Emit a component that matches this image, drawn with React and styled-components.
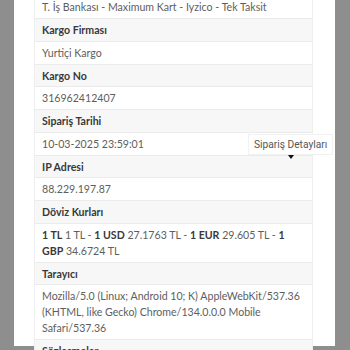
import React from "react";
import styled, { createGlobalStyle } from "styled-components";

const Global = createGlobalStyle`
  html, body { margin: 0; padding: 0; }
  body { font-family: "Lato", "Open Sans", sans-serif; }
`;

const rows = [
  { label: null, value: "T. İş Bankası - Maximum Kart - Iyzico - Tek Taksit" },
  { label: "Kargo Firması", value: "Yurtiçi Kargo" },
  { label: "Kargo No", value: "316962412407" },
  { label: "Sipariş Tarihi", value: "10-03-2025 23:59:01" },
  { label: "IP Adresi", value: "88.229.197.87" },
  {
    label: "Döviz Kurları",
    value: (
      <>
        <b>1 TL</b> 1 TL - <b>1 USD</b> 27.1763 TL - <b>1 EUR</b> 29.605 TL - <b>1 GBP</b> 34.6724 TL
      </>
    ),
  },
  {
    label: "Tarayıcı",
    value:
      "Mozilla/5.0 (Linux; Android 10; K) AppleWebKit/537.36 (KHTML, like Gecko) Chrome/134.0.0.0 Mobile Safari/537.36",
  },
  { label: "Sözleşmeler", value: "" },
];

const App = () => {
  return (
    <>
      <Global />
      <Overlay>
        <Modal>
          <Table>
            {rows.map((r, i) => (
              <React.Fragment key={i}>
                {r.label && <Cell $head>{r.label}</Cell>}
                <Cell>{r.value}</Cell>
              </React.Fragment>
            ))}
          </Table>
        </Modal>
        <Tooltip>
          Sipariş Detayları
          <Arrow />
        </Tooltip>
      </Overlay>
    </>
  );
};

export default App;

const Overlay = styled.div`
  position: relative;
  height: 350px;
  overflow: hidden;
  background-color: #8e8e8e;
  padding: 0 15px 0 14px;
`;

const Modal = styled.div`
  background-color: #fff;
  height: 100%;
  padding: 0 22px 0 20px;
`;

const Table = styled.div`
  margin-top: -3.75px;
  border-left: 1px solid #eeeeee;
  border-right: 1px solid #eeeeee;
`;

const Cell = styled.div`
  padding: 3px 7px 2.75px;
  line-height: 16px;
  font-size: 10.6px;
  color: ${(p) => (p.$head ? "#393939" : "#5e5e5e")};
  font-weight: ${(p) => (p.$head ? 700 : 400)};
  background-color: ${(p) => (p.$head ? "#f7f7f7" : "#fff")};
  border-bottom: 1px solid #ebebeb;
  b {
    color: #393939;
    font-weight: 700;
  }
`;

const Tooltip = styled.div`
  position: absolute;
  left: 248px;
  top: 134px;
  padding: 2px 5px;
  font-family: "Roboto", "Inter", sans-serif;
  font-size: 10.2px;
  line-height: 15px;
  color: #555;
  background-color: rgba(255, 255, 255, 0.96);
  border: 1px solid #f1f1f1;
  white-space: nowrap;
`;

const Arrow = styled.span`
  position: absolute;
  left: 50%;
  bottom: -5px;
  transform: translateX(-50%);
  border-left: 3.5px solid transparent;
  border-right: 3.5px solid transparent;
  border-top: 4px solid #111;
`;
